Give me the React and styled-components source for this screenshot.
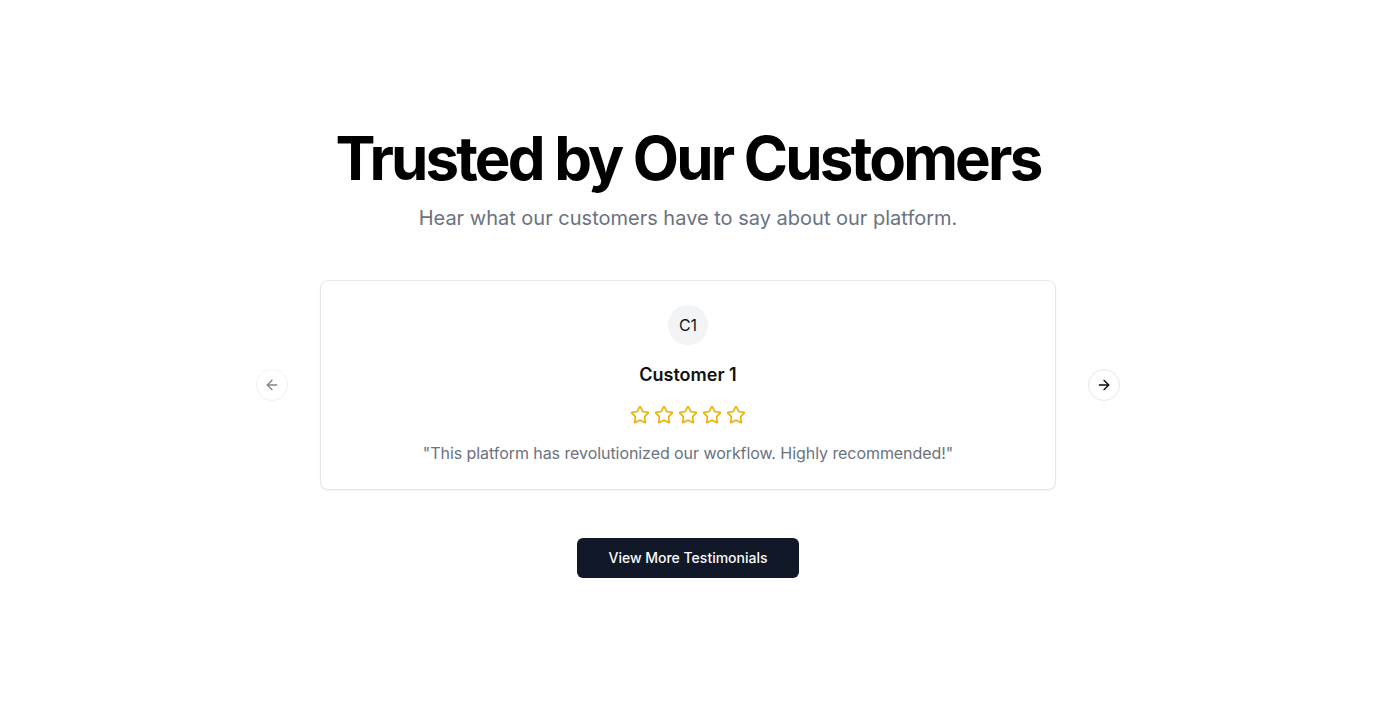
import React, { useState } from 'react';
import styled, { createGlobalStyle } from "styled-components";
import { ArrowLeft, ArrowRight, Star } from "lucide-react";

const testimonials = [
  { initials: "C1", name: "Customer 1", quote: "This platform has revolutionized our workflow. Highly recommended!" },
  { initials: "C2", name: "Customer 2", quote: "Great support and an intuitive interface. We love it." },
  { initials: "C3", name: "Customer 3", quote: "Our team is faster and happier since we switched." },
];

export default function App() {
  const [index, setIndex] = useState(0);
  const item = testimonials[index];

  return (
    <Page>
      <GlobalStyle />
      <Section>
        <Title>Trusted by Our Customers</Title>
        <Subtitle>Hear what our customers have to say about our platform.</Subtitle>
        <Carousel>
          <NavButton
            $side="left"
            disabled={index === 0}
            onClick={() => setIndex(index - 1)}
          >
            <ArrowLeft size={16} />
          </NavButton>
          <Card>
            <Avatar>{item.initials}</Avatar>
            <Name>{item.name}</Name>
            <Stars>
              {[0, 1, 2, 3, 4].map((i) => (
                <Star key={i} size={20} strokeWidth={2} />
              ))}
            </Stars>
            <Quote>"{item.quote}"</Quote>
          </Card>
          <NavButton
            $side="right"
            disabled={index === testimonials.length - 1}
            onClick={() => setIndex(index + 1)}
          >
            <ArrowRight size={16} />
          </NavButton>
        </Carousel>
        <MoreButton>View More Testimonials</MoreButton>
      </Section>
    </Page>
  );
}

const GlobalStyle = createGlobalStyle`
  * { box-sizing: border-box; }
  body {
    margin: 0;
    background: #fff;
    font-family: Inter, "Noto Sans", sans-serif;
    color: #0a0a0a;
  }
`;

const Page = styled.div`
  min-height: 100vh;
  display: flex;
  align-items: center;
  justify-content: center;
`;

const Section = styled.section`
  display: flex;
  flex-direction: column;
  align-items: center;
  width: 100%;
`;

const Title = styled.h1`
  margin: 0;
  font-size: 60px;
  line-height: 60px;
  font-weight: 700;
  letter-spacing: -0.047em;
  color: #000;
`;

const Subtitle = styled.p`
  margin: 16px 0 0;
  font-size: 20px;
  line-height: 28px;
  color: #6b7280;
`;

const Carousel = styled.div`
  position: relative;
  margin-top: 48px;
  width: 736px;
`;

const Card = styled.div`
  border: 1px solid #e5e7eb;
  border-radius: 8px;
  background: #fff;
  box-shadow: 0 1px 2px rgba(0, 0, 0, 0.05);
  padding: 24px;
  display: flex;
  flex-direction: column;
  align-items: center;
`;

const Avatar = styled.div`
  width: 40px;
  height: 40px;
  border-radius: 50%;
  background: #f3f4f6;
  display: flex;
  align-items: center;
  justify-content: center;
  font-size: 16px;
  color: #111827;
`;

const Name = styled.h3`
  margin: 16px 0 0;
  font-size: 18px;
  line-height: 28px;
  font-weight: 600;
  color: #111;
`;

const Stars = styled.div`
  margin-top: 16px;
  display: flex;
  gap: 4px;
  color: #eab308;
`;

const Quote = styled.p`
  margin: 16px 0 0;
  font-size: 16px;
  line-height: 24px;
  letter-spacing: -0.004em;
  color: #6b7280;
`;

const NavButton = styled.button`
  position: absolute;
  top: 50%;
  ${(p) => (p.$side === "left" ? "left: -64px;" : "right: -64px;")}
  transform: translateY(-50%);
  width: 32px;
  height: 32px;
  border-radius: 50%;
  border: 1px solid #e5e7eb;
  background: #fff;
  color: #0a0a0a;
  display: flex;
  align-items: center;
  justify-content: center;
  padding: 0;
  cursor: pointer;

  &:disabled {
    opacity: 0.5;
    cursor: default;
  }
`;

const MoreButton = styled.button`
  margin-top: 48px;
  height: 40px;
  padding: 0 31px 1px;
  border: none;
  border-radius: 6px;
  background: #111827;
  color: #f9fafb;
  font: 500 14px Inter, sans-serif;
  cursor: pointer;
`;
